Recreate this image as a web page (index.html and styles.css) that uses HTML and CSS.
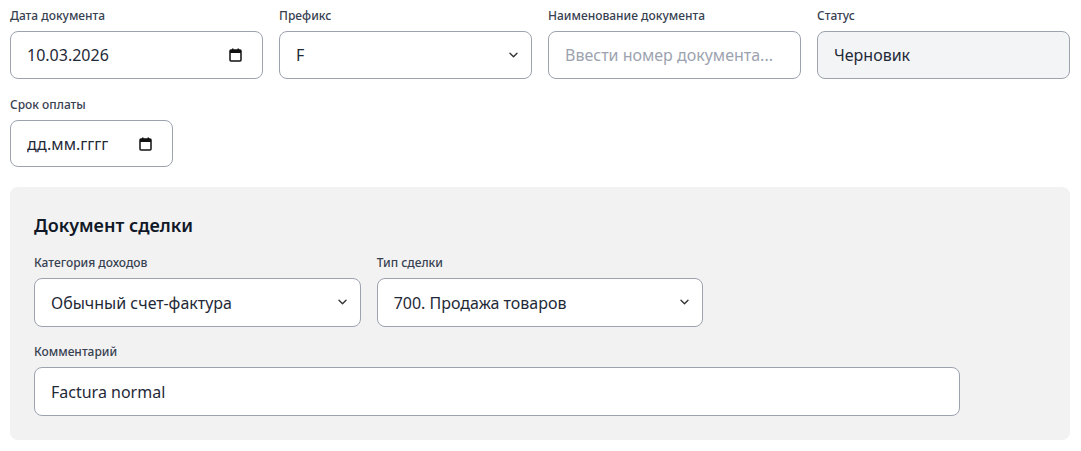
FILE: index.html
```html
<!DOCTYPE html>
<html lang="ru">
<head>
    <meta charset="UTF-8">
    <meta name="viewport" content="width=device-width, initial-scale=1.0">
    <title>Документ</title>
    <link rel="stylesheet" href="styles.css">
</head>
<body>
    <div class="form">
        <div class="top-grid">
            <div class="field">
                <label class="label">Дата документа</label>
                <div class="control">
                    <input class="input" type="text" value="10.03.2026">
                    <svg class="cal-icon" width="13" height="14" viewBox="0 0 13 14">
                        <rect x="1" y="2" width="11" height="11" rx="1" fill="none" stroke="#111" stroke-width="1.5"/>
                        <rect x="1" y="2" width="11" height="3" fill="#111"/>
                        <rect x="3" y="0.5" width="1.5" height="2.5" fill="#111"/>
                        <rect x="8.5" y="0.5" width="1.5" height="2.5" fill="#111"/>
                    </svg>
                </div>
            </div>
            <div class="field">
                <label class="label">Префикс</label>
                <div class="control">
                    <select class="input select">
                        <option>F</option>
                    </select>
                    <svg class="chevron" width="9" height="6" viewBox="0 0 9 6">
                        <path d="M1 1.2l3.5 3.5 3.5-3.5" fill="none" stroke="#333" stroke-width="1.4" stroke-linecap="round" stroke-linejoin="round"/>
                    </svg>
                </div>
            </div>
            <div class="field">
                <label class="label">Наименование документа</label>
                <input class="input" type="text" placeholder="Ввести номер документа...">
            </div>
            <div class="field">
                <label class="label">Статус</label>
                <input class="input readonly" type="text" value="Черновик" readonly>
            </div>
        </div>

        <div class="field due">
            <label class="label">Срок оплаты</label>
            <div class="control">
                <input class="input" type="text" value="дд.мм.гггг">
                <svg class="cal-icon" width="13" height="14" viewBox="0 0 13 14">
                    <rect x="1" y="2" width="11" height="11" rx="1" fill="none" stroke="#111" stroke-width="1.5"/>
                    <rect x="1" y="2" width="11" height="3" fill="#111"/>
                    <rect x="3" y="0.5" width="1.5" height="2.5" fill="#111"/>
                    <rect x="8.5" y="0.5" width="1.5" height="2.5" fill="#111"/>
                </svg>
            </div>
        </div>

        <section class="deal">
            <h2 class="deal-title">Документ сделки</h2>
            <div class="deal-grid">
                <div class="field span-4">
                    <label class="label">Категория доходов</label>
                    <div class="control">
                        <select class="input select">
                            <option>Обычный счет-фактура</option>
                        </select>
                        <svg class="chevron" width="9" height="6" viewBox="0 0 9 6">
                            <path d="M1 1.2l3.5 3.5 3.5-3.5" fill="none" stroke="#333" stroke-width="1.4" stroke-linecap="round" stroke-linejoin="round"/>
                        </svg>
                    </div>
                </div>
                <div class="field span-4">
                    <label class="label">Тип сделки</label>
                    <div class="control">
                        <select class="input select">
                            <option>700. Продажа товаров</option>
                        </select>
                        <svg class="chevron" width="9" height="6" viewBox="0 0 9 6">
                            <path d="M1 1.2l3.5 3.5 3.5-3.5" fill="none" stroke="#333" stroke-width="1.4" stroke-linecap="round" stroke-linejoin="round"/>
                        </svg>
                    </div>
                </div>
                <div class="field span-11">
                    <label class="label">Комментарий</label>
                    <input class="input" type="text" value="Factura normal">
                </div>
            </div>
        </section>
    </div>
</body>
</html>
```

FILE: styles.css
```css
* {
    box-sizing: border-box;
}

body {
    margin: 0;
    background: #fff;
    font-family: 'Noto Sans', 'Open Sans', sans-serif;
    color: #111827;
}

.form {
    padding: 8px 11px 10px 10px;
}

.top-grid {
    display: grid;
    grid-template-columns: repeat(4, 1fr);
    gap: 16px;
}

.field {
    display: flex;
    flex-direction: column;
}

.label {
    font-size: 12px;
    line-height: 16px;
    font-weight: 500;
    color: #374151;
    margin-bottom: 7px;
}

.control {
    position: relative;
}

.input {
    width: 100%;
    height: 48px;
    padding: 0 16px;
    border: 1px solid #9ca3af;
    border-radius: 8px;
    background: #fff;
    font-family: inherit;
    font-size: 16px;
    color: #1f2937;
    outline: none;
}

.input::placeholder {
    color: #9ca3af;
}

.readonly {
    background: #f3f4f6;
}

.select {
    appearance: none;
    -webkit-appearance: none;
    padding-right: 40px;
}

.chevron {
    position: absolute;
    right: 14px;
    top: 21px;
    pointer-events: none;
}

.cal-icon {
    position: absolute;
    right: 21px;
    top: 17px;
    pointer-events: none;
}

.due {
    width: 163px;
    margin-top: 18px;
}

.due .input {
    height: 47px;
}

.deal {
    margin-top: 20px;
    background: #f2f2f2;
    border-radius: 8px;
    padding: 24px;
}

.deal-title {
    margin: 0 0 16px 0;
    font-size: 18px;
    line-height: 28px;
    font-weight: 600;
    color: #111827;
}

.deal-grid {
    display: grid;
    grid-template-columns: repeat(12, 1fr);
    column-gap: 16px;
    row-gap: 17px;
}

.deal .input {
    height: 49px;
}

.span-4 {
    grid-column: span 4;
}

.span-11 {
    grid-column: span 11;
}
```
